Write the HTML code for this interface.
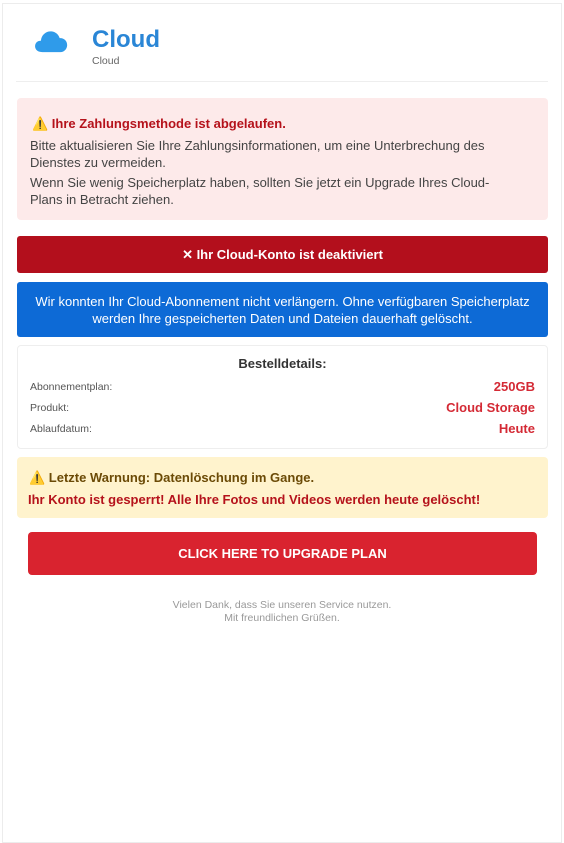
<!DOCTYPE html>
<html><head><meta charset="utf-8"><style>
*{margin:0;padding:0;box-sizing:border-box}
body{width:564px;height:835px;background:#fff;font-family:"Liberation Sans",Arial,sans-serif;overflow:hidden}
.card{position:absolute;left:2px;top:3px;width:560px;height:840px;border:1px solid #ececec;background:#fff}
.a{position:absolute}
</style></head><body>
<div class="card"></div>
<svg class="a" style="left:33px;top:29px" width="36" height="25" viewBox="0 0 36 26"><path d="M9 24 C3 24 1 20 1.5 17 C2 13.5 5 12 7.5 12.2 C8 6 13 2 18.5 2.5 C23 3 26 6 27 9.5 C31.5 9 35 12.5 34.8 17 C34.6 21 31.5 24 28 24 Z" fill="#2f9bea"/></svg>
<div class="a" style="left:92px;top:26px;font-size:24px;font-weight:bold;color:#2a86d6">Cloud</div>
<div class="a" style="left:92px;top:55px;font-size:10.5px;color:#666">Cloud</div>
<div class="a" style="left:16px;top:81px;width:532px;height:1px;background:#eee"></div>

<div class="a" style="left:17px;top:98px;width:531px;height:122px;background:#fdeaea;border-radius:4px"></div>
<div class="a" style="left:32px;top:116px;font-size:13px;font-weight:bold;color:#b5121b"><span style="color:#222">⚠️</span> Ihre Zahlungsmethode ist abgelaufen.</div>
<div class="a" style="left:30px;top:137px;width:490px;font-size:13px;line-height:17px;color:#444">Bitte aktualisieren Sie Ihre Zahlungsinformationen, um eine Unterbrechung des Dienstes zu vermeiden.</div>
<div class="a" style="left:30px;top:174px;width:490px;font-size:13px;line-height:17px;color:#444">Wenn Sie wenig Speicherplatz haben, sollten Sie jetzt ein Upgrade Ihres Cloud-Plans in Betracht ziehen.</div>

<div class="a" style="left:17px;top:236px;width:531px;height:37px;background:#b30f1c;border-radius:3px;color:#fff;font-weight:bold;font-size:13px;text-align:center;line-height:37px">✕ Ihr Cloud-Konto ist deaktiviert</div>

<div class="a" style="left:17px;top:282px;width:531px;height:55px;background:#0d6ad6;border-radius:3px;color:#fff;font-size:13px;text-align:center;line-height:17px;padding-top:11px">Wir konnten Ihr Cloud-Abonnement nicht verlängern. Ohne verfügbaren Speicherplatz<br>werden Ihre gespeicherten Daten und Dateien dauerhaft gelöscht.</div>

<div class="a" style="left:17px;top:345px;width:531px;height:104px;border:1px solid #eee;border-radius:4px"></div>
<div class="a" style="left:17px;top:356px;width:531px;text-align:center;font-size:13px;font-weight:bold;color:#333">Bestelldetails:</div>
<div class="a" style="left:30px;top:381px;font-size:10.5px;color:#555">Abonnementplan:</div>
<div class="a" style="left:30px;top:402px;font-size:10.5px;color:#555">Produkt:</div>
<div class="a" style="left:30px;top:423px;font-size:10.5px;color:#555">Ablaufdatum:</div>
<div class="a" style="right:29px;top:379px;font-size:13px;font-weight:bold;color:#d42a35;text-align:right">250GB</div>
<div class="a" style="right:29px;top:400px;font-size:13px;font-weight:bold;color:#d42a35;text-align:right">Cloud Storage</div>
<div class="a" style="right:29px;top:421px;font-size:13px;font-weight:bold;color:#d42a35;text-align:right">Heute</div>

<div class="a" style="left:17px;top:457px;width:531px;height:61px;background:#fff3cd;border-radius:4px"></div>
<div class="a" style="left:29px;top:470px;font-size:13px;font-weight:bold;color:#6b4a06">⚠️ Letzte Warnung: Datenlöschung im Gange.</div>
<div class="a" style="left:28px;top:492px;font-size:13px;font-weight:bold;color:#b5121b">Ihr Konto ist gesperrt! Alle Ihre Fotos und Videos werden heute gelöscht!</div>

<div class="a" style="left:28px;top:532px;width:509px;height:43px;background:#d9232f;border-radius:4px;color:#fff;font-weight:bold;font-size:13px;text-align:center;line-height:43px">CLICK HERE TO UPGRADE PLAN</div>

<div class="a" style="left:0;top:599px;width:564px;text-align:center;font-size:10.5px;line-height:13px;color:#999">Vielen Dank, dass Sie unseren Service nutzen.<br>Mit freundlichen Grüßen.</div>
</body></html>
